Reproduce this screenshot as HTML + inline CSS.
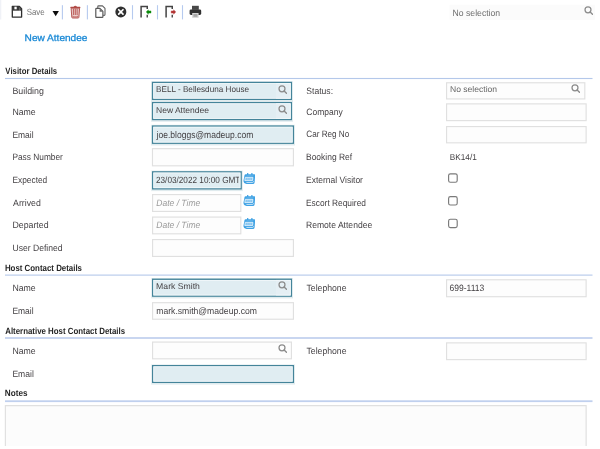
<!DOCTYPE html>
<html><head><meta charset="utf-8"><title>New Attendee</title><style>
html,body{margin:0;padding:0;background:#fff;}
body{width:600px;height:449px;position:relative;overflow:hidden;font-family:"Liberation Sans",sans-serif;text-rendering:geometricPrecision;}
.a{position:absolute;}
.t{position:absolute;white-space:nowrap;line-height:14px;height:14px;}
.t span{display:inline-block;transform-origin:0 50%;}
#w{position:absolute;left:0;top:0;width:600px;height:449px;filter:blur(0.4px);}
</style></head><body><div id="w">
<svg class="a" style="left:0;top:0" width="600" height="449" viewBox="0 0 600 449"><rect x="0" y="0" width="1.3" height="19.5" fill="#f0f2f7"/><rect x="449.6" y="4.7" width="145.2" height="15.2" fill="#fbfbfb"/><rect x="5" y="77.95" width="587.5" height="1.1" fill="#b4c8ea"/><rect x="5" y="274.55" width="587.5" height="1.1" fill="#b4c8ea"/><rect x="5" y="337.15" width="587.5" height="1.7" fill="#c0d0ee"/><rect x="5" y="400.3" width="587.5" height="1.8" fill="#c0d0ee"/><rect x="152.1" y="82.2" width="139.9" height="18.4" fill="none" stroke="#3f8196" stroke-opacity="0.16" stroke-width="2"/><rect x="152.58" y="82.47" width="138.75" height="16.85" fill="#e0edf2" stroke="#44849a" stroke-width="1.35"/><rect x="276" y="83.15" width="14.65" height="15.5" fill="#e5eff4"/><rect x="153.65" y="83.55" width="136.6" height="14.7" fill="none" stroke="#f4f9fb" stroke-width="0.8"/><rect x="152.1" y="102.4" width="139.9" height="18.4" fill="none" stroke="#3f8196" stroke-opacity="0.16" stroke-width="2"/><rect x="152.58" y="102.67" width="138.75" height="16.85" fill="#e0edf2" stroke="#44849a" stroke-width="1.35"/><rect x="276" y="103.35" width="14.65" height="15.5" fill="#e5eff4"/><rect x="153.65" y="103.75" width="136.6" height="14.7" fill="none" stroke="#f4f9fb" stroke-width="0.8"/><rect x="152.1" y="125.8" width="141.9" height="18.7" fill="none" stroke="#3f8196" stroke-opacity="0.16" stroke-width="2"/><rect x="152.58" y="126.08" width="140.75" height="17.15" fill="#e0edf2" stroke="#44849a" stroke-width="1.35"/><rect x="153.65" y="127.15" width="138.6" height="15" fill="none" stroke="#f4f9fb" stroke-width="0.8"/><rect x="152.47" y="148.67" width="140.95" height="17.15" fill="#fdfdfd" stroke="#e0e0e0" stroke-width="1.15"/><rect x="152.2" y="171.6" width="89.6" height="18.5" fill="none" stroke="#3f8196" stroke-opacity="0.16" stroke-width="2"/><rect x="152.68" y="171.88" width="88.45" height="16.95" fill="#e0edf2" stroke="#44849a" stroke-width="1.35"/><rect x="153.75" y="172.95" width="86.3" height="14.8" fill="none" stroke="#f4f9fb" stroke-width="0.8"/><rect x="152.57" y="194.57" width="88.25" height="16.85" fill="#fdfdfd" stroke="#e0e0e0" stroke-width="1.15"/><rect x="152.57" y="217.07" width="88.25" height="16.75" fill="#fdfdfd" stroke="#e0e0e0" stroke-width="1.15"/><rect x="152.57" y="239.57" width="140.85" height="16.85" fill="#fdfdfd" stroke="#e0e0e0" stroke-width="1.15"/><rect x="152.2" y="279" width="139.8" height="18.4" fill="none" stroke="#3f8196" stroke-opacity="0.16" stroke-width="2"/><rect x="152.68" y="279.28" width="138.65" height="16.85" fill="#e0edf2" stroke="#44849a" stroke-width="1.35"/><rect x="276" y="279.95" width="14.65" height="15.5" fill="#e5eff4"/><rect x="153.75" y="280.35" width="136.5" height="14.7" fill="none" stroke="#f4f9fb" stroke-width="0.8"/><rect x="152.57" y="302.68" width="140.85" height="16.55" fill="#fdfdfd" stroke="#e0e0e0" stroke-width="1.15"/><rect x="152.57" y="342.07" width="138.85" height="16.75" fill="#fdfdfd" stroke="#e0e0e0" stroke-width="1.15"/><rect x="152.2" y="365.4" width="141.8" height="18.2" fill="none" stroke="#3f8196" stroke-opacity="0.16" stroke-width="2"/><rect x="152.68" y="365.68" width="140.65" height="16.65" fill="#e0edf2" stroke="#44849a" stroke-width="1.35"/><rect x="153.75" y="366.75" width="138.5" height="14.5" fill="none" stroke="#f4f9fb" stroke-width="0.8"/><rect x="446.57" y="82.78" width="138.25" height="16.15" fill="#fdfdfd" stroke="#e0e0e0" stroke-width="1.15"/><rect x="446.57" y="103.88" width="139.55" height="16.75" fill="#fdfdfd" stroke="#e0e0e0" stroke-width="1.15"/><rect x="446.57" y="126.58" width="139.55" height="16.25" fill="#fdfdfd" stroke="#e0e0e0" stroke-width="1.15"/><rect x="446.57" y="279.77" width="139.55" height="16.95" fill="#fdfdfd" stroke="#e0e0e0" stroke-width="1.15"/><rect x="446.57" y="342.88" width="139.55" height="16.75" fill="#fdfdfd" stroke="#e0e0e0" stroke-width="1.15"/><rect x="4.8" y="405" width="581.9" height="41" fill="#fcfcfc"/><path d="M5.38 446V405.57H586.12V446" fill="none" stroke="#e0e0e0" stroke-width="1.15"/><rect x="448.6" y="173.8" width="8.6" height="8.4" rx="1.8" fill="#fff" stroke="#7a7a7a" stroke-width="1.15"/><rect x="448.6" y="196.6" width="8.6" height="8.4" rx="1.8" fill="#fff" stroke="#7a7a7a" stroke-width="1.15"/><rect x="448.6" y="219.2" width="8.6" height="8.4" rx="1.8" fill="#fff" stroke="#7a7a7a" stroke-width="1.15"/><rect x="61.85" y="5.2" width="1.1" height="14.2" fill="#b6caef"/><rect x="86.85" y="5.2" width="1.1" height="14.2" fill="#b6caef"/><rect x="131.95" y="5.2" width="1.1" height="14.2" fill="#b6caef"/><rect x="156.95" y="5.2" width="1.1" height="14.2" fill="#b6caef"/><rect x="181.95" y="5.2" width="1.1" height="14.2" fill="#b6caef"/></svg>
<svg class="a" style="left:277.6px;top:84.6px" width="9.2" height="9.2" viewBox="0 0 10 10"><circle cx="4.35" cy="4.2" r="3.25" fill="none" stroke="#8b8b8b" stroke-width="1.35"/><path d="M6.7 6.5 L9.2 8.9" stroke="#8b8b8b" stroke-width="1.5" stroke-linecap="round"/></svg>
<svg class="a" style="left:277.6px;top:104.8px" width="9.2" height="9.2" viewBox="0 0 10 10"><circle cx="4.35" cy="4.2" r="3.25" fill="none" stroke="#8b8b8b" stroke-width="1.35"/><path d="M6.7 6.5 L9.2 8.9" stroke="#8b8b8b" stroke-width="1.5" stroke-linecap="round"/></svg>
<svg class="a" style="left:277.6px;top:281.4px" width="9.2" height="9.2" viewBox="0 0 10 10"><circle cx="4.35" cy="4.2" r="3.25" fill="none" stroke="#8b8b8b" stroke-width="1.35"/><path d="M6.7 6.5 L9.2 8.9" stroke="#8b8b8b" stroke-width="1.5" stroke-linecap="round"/></svg>
<svg class="a" style="left:277.6px;top:344.3px" width="9.2" height="9.2" viewBox="0 0 10 10"><circle cx="4.35" cy="4.2" r="3.25" fill="none" stroke="#8b8b8b" stroke-width="1.35"/><path d="M6.7 6.5 L9.2 8.9" stroke="#8b8b8b" stroke-width="1.5" stroke-linecap="round"/></svg>
<svg class="a" style="left:571px;top:84.4px" width="9.2" height="9.2" viewBox="0 0 10 10"><circle cx="4.35" cy="4.2" r="3.25" fill="none" stroke="#8b8b8b" stroke-width="1.35"/><path d="M6.7 6.5 L9.2 8.9" stroke="#8b8b8b" stroke-width="1.5" stroke-linecap="round"/></svg>
<svg class="a" style="left:584.2px;top:6.2px" width="9.2" height="9.2" viewBox="0 0 10 10"><circle cx="4.35" cy="4.2" r="3.25" fill="none" stroke="#8b8b8b" stroke-width="1.35"/><path d="M6.7 6.5 L9.2 8.9" stroke="#8b8b8b" stroke-width="1.5" stroke-linecap="round"/></svg>
<svg class="a" style="left:243px;top:172.7px" width="12.4" height="11.6" viewBox="0 0 12.4 11.6"><path d="M2.7 1.2H11.3Q12.3 1.2 12.2 2.2L11.6 9.6Q11.5 10.9 10.3 10.9H3.6Q0.3 10.3 0.5 7.6L1.5 2.3Q1.7 1.2 2.7 1.2Z" fill="#3fa2e4"/><path d="M2.3 4.3H9.9L9.6 7.6H1.8Z" fill="#7cc0ee" stroke="#f4fafe" stroke-width="0.8"/><path d="M4.3 4.6L4.1 7.3M6.1 4.6L6 7.3M7.9 4.6L7.8 7.3" stroke="#d6ebfa" stroke-width="0.5"/><path d="M3.4 9.5H9.6Q10.4 9.5 10.5 8.3" fill="none" stroke="#f0f8fe" stroke-width="0.7"/><path d="M4.7 0.5V1.9M8.9 0.5V1.9" stroke="#3fa2e4" stroke-width="1.3" stroke-linecap="round"/><path d="M3.6 2.5H10.4" stroke="#6ab6ea" stroke-width="0.6"/></svg>

<svg class="a" style="left:243px;top:195.3px" width="12.4" height="11.6" viewBox="0 0 12.4 11.6"><path d="M2.7 1.2H11.3Q12.3 1.2 12.2 2.2L11.6 9.6Q11.5 10.9 10.3 10.9H3.6Q0.3 10.3 0.5 7.6L1.5 2.3Q1.7 1.2 2.7 1.2Z" fill="#3fa2e4"/><path d="M2.3 4.3H9.9L9.6 7.6H1.8Z" fill="#7cc0ee" stroke="#f4fafe" stroke-width="0.8"/><path d="M4.3 4.6L4.1 7.3M6.1 4.6L6 7.3M7.9 4.6L7.8 7.3" stroke="#d6ebfa" stroke-width="0.5"/><path d="M3.4 9.5H9.6Q10.4 9.5 10.5 8.3" fill="none" stroke="#f0f8fe" stroke-width="0.7"/><path d="M4.7 0.5V1.9M8.9 0.5V1.9" stroke="#3fa2e4" stroke-width="1.3" stroke-linecap="round"/><path d="M3.6 2.5H10.4" stroke="#6ab6ea" stroke-width="0.6"/></svg>

<svg class="a" style="left:243px;top:218.1px" width="12.4" height="11.6" viewBox="0 0 12.4 11.6"><path d="M2.7 1.2H11.3Q12.3 1.2 12.2 2.2L11.6 9.6Q11.5 10.9 10.3 10.9H3.6Q0.3 10.3 0.5 7.6L1.5 2.3Q1.7 1.2 2.7 1.2Z" fill="#3fa2e4"/><path d="M2.3 4.3H9.9L9.6 7.6H1.8Z" fill="#7cc0ee" stroke="#f4fafe" stroke-width="0.8"/><path d="M4.3 4.6L4.1 7.3M6.1 4.6L6 7.3M7.9 4.6L7.8 7.3" stroke="#d6ebfa" stroke-width="0.5"/><path d="M3.4 9.5H9.6Q10.4 9.5 10.5 8.3" fill="none" stroke="#f0f8fe" stroke-width="0.7"/><path d="M4.7 0.5V1.9M8.9 0.5V1.9" stroke="#3fa2e4" stroke-width="1.3" stroke-linecap="round"/><path d="M3.6 2.5H10.4" stroke="#6ab6ea" stroke-width="0.6"/></svg>

<svg class="a" style="left:11px;top:5px" width="12" height="14" viewBox="0 0 12 14"><path d="M1.3 1.5H8.4L10.6 3.7V12.1H1.3Z" fill="#fff" stroke="#2e2e2e" stroke-width="1.3" stroke-linejoin="round"/><path d="M1.6 1.4H8.2V5.7H1.6Z" fill="#3a3a3a"/><rect x="3.4" y="1.7" width="2.3" height="2.6" fill="#fff"/><path d="M8.2 1.6L10.2 3.6V5.7H8.2Z" fill="#4a4a4a"/></svg>
<svg class="a" style="left:52px;top:10px" width="8" height="7" viewBox="0 0 8 7"><path d="M0.5 0.9H6.9L3.7 6.2Z" fill="#0c0c0c"/></svg>
<svg class="a" style="left:70px;top:5px" width="11" height="13.5" viewBox="0 0 11 13.5"><path d="M3.5 1.9Q5.3 -0.4 7.1 1.9Z" fill="#b4504c"/><rect x="0.3" y="1.7" width="10.1" height="1.2" rx="0.5" fill="#b04a46"/><path d="M1.1 3.1H9.6L8.9 12.3Q8.8 13 8.1 13H2.6Q1.9 13 1.8 12.3Z" fill="#e6c3c1" stroke="#b04a46" stroke-width="0.9"/><path d="M3.55 3.6V10M5.35 3.6V10M7.15 3.6V10" stroke="#bd605c" stroke-width="0.95"/><path d="M2.6 11.6H8.1" stroke="#c06561" stroke-width="1.6"/><path d="M3.3 10.9H7.5" stroke="#fbf1f0" stroke-width="0.8"/></svg>
<svg class="a" style="left:95px;top:5px" width="11" height="13.5" viewBox="0 0 11 13.5"><path d="M2.8 3.2V1.6Q2.8 0.9 3.5 0.9H7.5L10 3.4V9.6Q10 10.4 9.2 10.4H8.2" fill="#fff" stroke="#606060" stroke-width="1.1" stroke-linejoin="round"/><path d="M0.8 4.1Q0.8 3.4 1.5 3.4H4.9L7.9 6.4V11.7Q7.9 12.4 7.2 12.4H1.5Q0.8 12.4 0.8 11.7Z" fill="#fff" stroke="#585858" stroke-width="1.2" stroke-linejoin="round"/><path d="M4.6 3.5V6.7H7.8Z" fill="#6e6e6e"/></svg>
<svg class="a" style="left:115px;top:6px" width="12" height="12" viewBox="0 0 12 12"><circle cx="5.85" cy="5.9" r="5.5" fill="#303030"/><path d="M3.7 3.75L8 8.05M8 3.75L3.7 8.05" stroke="#fff" stroke-width="1.7" stroke-linecap="round"/></svg>
<svg class="a" style="left:140px;top:5px" width="12" height="13.5" viewBox="0 0 12 13.5"><path d="M1.1 12.6V1.5H7.25V3.9" fill="none" stroke="#444" stroke-width="1.5"/><path d="M7.25 9.8V12.6" stroke="#444" stroke-width="1.4"/><path d="M6.2 7L8.4 4.8V5.9H11V8.1H8.4V9.2Z" fill="#0b8a0b" stroke="#0b8a0b" stroke-width="0.4" stroke-linejoin="round"/></svg>
<svg class="a" style="left:165px;top:5px" width="12" height="13.5" viewBox="0 0 12 13.5"><path d="M1.1 12.6V1.5H7.25V3.9" fill="none" stroke="#444" stroke-width="1.5"/><path d="M7.25 9.8V12.6" stroke="#444" stroke-width="1.4"/><path d="M10.8 7L8.6 4.8V5.9H6.2V8.1H8.6V9.2Z" fill="#b23434" stroke="#b23434" stroke-width="0.4" stroke-linejoin="round"/></svg>
<svg class="a" style="left:189px;top:5px" width="13" height="13.5" viewBox="0 0 13 13.5"><rect x="3" y="0.8" width="6.8" height="4" fill="#484848"/><rect x="0.6" y="4.4" width="11.6" height="5.5" rx="1.4" fill="#303030"/><rect x="3.2" y="8" width="6.4" height="4.8" fill="#d2d2d2"/><rect x="4.4" y="9" width="4" height="2.8" fill="#a6a6a6"/></svg>

<div class="t" style="left:26px;top:5px;font-size:9px;color:#757575;"><span style="transform:translateX(0.65px) scaleX(0.8765)">Save</span></div>
<div class="t" style="left:24px;top:32px;font-size:9.5px;color:#1c8ad6;-webkit-text-stroke:0.3px #1c8ad6;"><span style="transform:translateX(0.59px) scaleX(1.0628)">New Attendee</span></div>
<div class="t" style="left:452px;top:6px;font-size:9px;color:#6e6e6e;"><span style="transform:translateX(0.61px) scaleX(0.9595)">No selection</span></div>
<div class="t" style="left:5px;top:64px;font-size:9px;color:#262626;font-weight:700;"><span style="transform:translateX(0.36px) scaleX(0.8657)">Visitor Details</span></div>
<div class="t" style="left:12px;top:84px;font-size:9.2px;color:#423f42;"><span style="transform:translateX(0.39px) scaleX(0.9639)">Building</span></div>
<div class="t" style="left:12px;top:105px;font-size:9.2px;color:#423f42;"><span style="transform:translateX(0.4px) scaleX(0.9519)">Name</span></div>
<div class="t" style="left:12px;top:128px;font-size:9.2px;color:#423f42;"><span style="transform:translateX(0.42px) scaleX(0.9218)">Email</span></div>
<div class="t" style="left:12px;top:150px;font-size:9.2px;color:#423f42;"><span style="transform:translateX(0.43px) scaleX(0.9057)">Pass Number</span></div>
<div class="t" style="left:12px;top:173px;font-size:9.2px;color:#423f42;"><span style="transform:translateX(0.43px) scaleX(0.9093)">Expected</span></div>
<div class="t" style="left:13px;top:196px;font-size:9.2px;color:#423f42;"><span style="transform:translateX(0.1px) scaleX(0.9518)">Arrived</span></div>
<div class="t" style="left:12px;top:218px;font-size:9.2px;color:#423f42;"><span style="transform:translateX(0.4px) scaleX(0.9576)">Departed</span></div>
<div class="t" style="left:12px;top:241px;font-size:9.2px;color:#423f42;"><span style="transform:translateX(0.46px) scaleX(0.9344)">User Defined</span></div>
<div class="t" style="left:156px;top:82px;font-size:8.4px;color:#423f42;"><span style="transform:translateX(0.05px) scaleX(0.9729)">BELL - Bellesduna House</span></div>
<div class="t" style="left:156px;top:103px;font-size:8.4px;color:#423f42;"><span style="transform:translateX(0.02px) scaleX(1.0164)">New Attendee</span></div>
<div class="t" style="left:156px;top:129px;font-size:9.6px;color:#423f42;"><span style="transform:translateX(0.61px) scaleX(0.8873)">joe.bloggs@madeup.com</span></div>
<div class="t" style="left:155px;top:173px;font-size:9px;color:#423f42;width:84.3px;overflow:hidden;"><span style="transform:translateX(0.99px) scaleX(0.9116)">23/03/2022 10:00 GMT</span></div>
<div class="t" style="left:156px;top:196px;font-size:9.2px;color:#9a9a9a;font-style:italic;"><span style="transform:translateX(0.24px) scaleX(0.9284)">Date / Time</span></div>
<div class="t" style="left:156px;top:218px;font-size:9.2px;color:#9a9a9a;font-style:italic;"><span style="transform:translateX(0.24px) scaleX(0.9284)">Date / Time</span></div>
<div class="t" style="left:306px;top:84px;font-size:9.2px;color:#423f42;"><span style="transform:translateX(0.31px) scaleX(0.9338)">Status:</span></div>
<div class="t" style="left:306px;top:105px;font-size:9.2px;color:#423f42;"><span style="transform:translateX(0.27px) scaleX(0.9251)">Company</span></div>
<div class="t" style="left:306px;top:127px;font-size:9.2px;color:#423f42;"><span style="transform:translateX(0.29px) scaleX(0.8861)">Car Reg No</span></div>
<div class="t" style="left:306px;top:150px;font-size:9.2px;color:#423f42;"><span style="transform:translateX(0.02px) scaleX(0.9210)">Booking Ref</span></div>
<div class="t" style="left:306px;top:173px;font-size:9.2px;color:#423f42;"><span style="transform:translateX(0.02px) scaleX(0.9237)">External Visitor</span></div>
<div class="t" style="left:306px;top:196px;font-size:9.2px;color:#423f42;"><span style="transform:translateX(0.03px) scaleX(0.9093)">Escort Required</span></div>
<div class="t" style="left:306px;top:218px;font-size:9.2px;color:#423f42;"><span style="transform:translateX(0.01px) scaleX(0.9321)">Remote Attendee</span></div>
<div class="t" style="left:450px;top:82px;font-size:8.4px;color:#666;"><span style="transform:translateX(0.01px) scaleX(1.0213)">No selection</span></div>
<div class="t" style="left:449px;top:150px;font-size:8.5px;color:#423f42;"><span style="transform:translateX(0.74px) scaleX(0.9698)">BK14/1</span></div>
<div class="t" style="left:4px;top:261px;font-size:9px;color:#262626;font-weight:700;"><span style="transform:translateX(0.89px) scaleX(0.8760)">Host Contact Details</span></div>
<div class="t" style="left:12px;top:281px;font-size:9.2px;color:#423f42;"><span style="transform:translateX(0.4px) scaleX(0.9519)">Name</span></div>
<div class="t" style="left:12px;top:304px;font-size:9.2px;color:#423f42;"><span style="transform:translateX(0.42px) scaleX(0.9218)">Email</span></div>
<div class="t" style="left:156px;top:279px;font-size:8.4px;color:#423f42;"><span style="transform:translateX(0.1px) scaleX(1.0342)">Mark Smith</span></div>
<div class="t" style="left:156px;top:304px;font-size:9.3px;color:#423f42;"><span style="transform:translateX(0.24px) scaleX(0.9267)">mark.smith@madeup.com</span></div>
<div class="t" style="left:306px;top:281px;font-size:9.2px;color:#423f42;"><span style="transform:translateX(0.53px) scaleX(0.9428)">Telephone</span></div>
<div class="t" style="left:449px;top:281px;font-size:9.2px;color:#423f42;"><span style="transform:translateX(0.57px) scaleX(0.9270)">699-1113</span></div>
<div class="t" style="left:5px;top:324px;font-size:9px;color:#262626;font-weight:700;"><span style="transform:translateX(0.24px) scaleX(0.8746)">Alternative Host Contact Details</span></div>
<div class="t" style="left:12px;top:344px;font-size:9.2px;color:#423f42;"><span style="transform:translateX(0.4px) scaleX(0.9477)">Name</span></div>
<div class="t" style="left:12px;top:367px;font-size:9.2px;color:#423f42;"><span style="transform:translateX(0.41px) scaleX(0.9310)">Email</span></div>
<div class="t" style="left:306px;top:344px;font-size:9.2px;color:#423f42;"><span style="transform:translateX(0.53px) scaleX(0.9428)">Telephone</span></div>
<div class="t" style="left:4px;top:386px;font-size:9px;color:#262626;font-weight:700;"><span style="transform:translateX(0.87px) scaleX(0.9089)">Notes</span></div>
</div></body></html>
